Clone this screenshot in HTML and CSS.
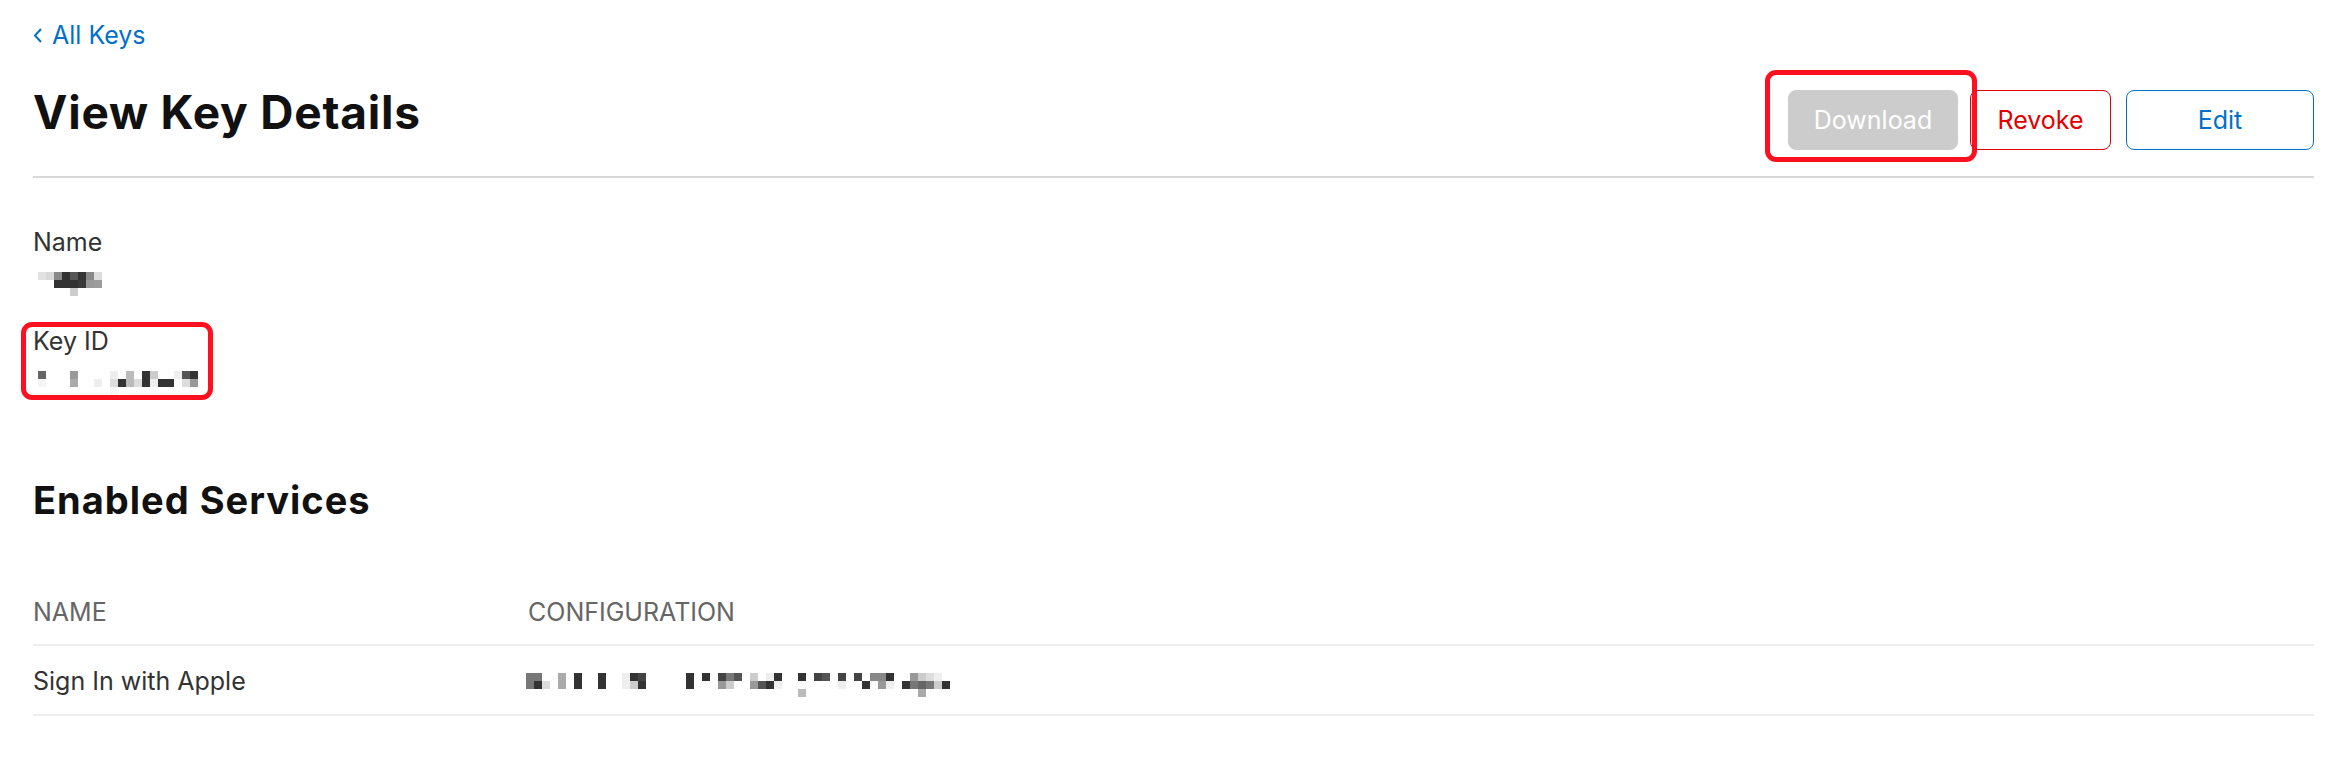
FILE: index.html
```html
<!DOCTYPE html>
<html lang="en">
<head>
<meta charset="UTF-8">
<meta name="viewport" content="width=device-width, initial-scale=1">
<title>View Key Details</title>
<link rel="stylesheet" href="styles.css">
</head>
<body>

<div class="page">
  <a class="back" href="#">
    <svg class="chev" viewBox="0 0 9 15"><polyline points="8,1 2,7.5 8,14" fill="none" stroke="#0070c9" stroke-width="2"/></svg>All Keys
  </a>

  <!-- title + actions -->
  <header class="head">
    <h1>View Key Details</h1>
    <div class="actions">
      <span class="marked">
        <button class="btn btn-off">Download</button>
        <span class="mark mark-dl"></span>
      </span>
      <button class="btn btn-red">Revoke</button>
      <button class="btn btn-blue">Edit</button>
    </div>
  </header>

  <!-- key fields (values are pixelated) -->
  <section class="details">
    <div class="field">
      <div class="label">Name</div>
      <svg class="mosaic" width="64" height="24" viewBox="0 0 8 3" shape-rendering="crispEdges">
        <rect x="0" y="0" width="1" height="1" fill="#e2e2e2"/>
        <rect x="1" y="0" width="1" height="1" fill="#d9d9d9"/>
        <rect x="2" y="0" width="1" height="1" fill="#8a8a8a"/>
        <rect x="3" y="0" width="1" height="1" fill="#333"/>
        <rect x="4" y="0" width="1" height="1" fill="#555"/>
        <rect x="5" y="0" width="1" height="1" fill="#333"/>
        <rect x="6" y="0" width="1" height="1" fill="#888"/>
        <rect x="7" y="0" width="1" height="1" fill="#dcdcdc"/>
        <rect x="2" y="1" width="1" height="1" fill="#333"/>
        <rect x="3" y="1" width="1" height="1" fill="#333"/>
        <rect x="4" y="1" width="1" height="1" fill="#333"/>
        <rect x="5" y="1" width="1" height="1" fill="#3a3a3a"/>
        <rect x="6" y="1" width="1" height="1" fill="#999"/>
        <rect x="7" y="1" width="1" height="1" fill="#9c9c9c"/>
        <rect x="4" y="2" width="1" height="1" fill="#ccc"/>
      </svg>
    </div>
    <div class="field">
      <div class="label">Key ID</div>
      <svg class="mosaic" width="160" height="24" viewBox="0 0 20 3" shape-rendering="crispEdges">
        <rect x="0" y="0" width="1" height="1" fill="#666"/>
        <rect x="4" y="0" width="1" height="1" fill="#999"/>
        <rect x="9" y="0" width="1" height="1" fill="#eee"/>
        <rect x="11" y="0" width="1" height="1" fill="#bbb"/>
        <rect x="13" y="0" width="1" height="1" fill="#333"/>
        <rect x="14" y="0" width="1" height="1" fill="#ccc"/>
        <rect x="17" y="0" width="1" height="1" fill="#eee"/>
        <rect x="18" y="0" width="1" height="1" fill="#555"/>
        <rect x="19" y="0" width="1" height="1" fill="#333"/>
        <rect x="0" y="1" width="1" height="1" fill="#f5f5f5"/>
        <rect x="4" y="1" width="1" height="1" fill="#aaa"/>
        <rect x="7" y="1" width="1" height="1" fill="#eee"/>
        <rect x="9" y="1" width="1" height="1" fill="#ddd"/>
        <rect x="10" y="1" width="1" height="1" fill="#333"/>
        <rect x="11" y="1" width="1" height="1" fill="#bbb"/>
        <rect x="12" y="1" width="1" height="1" fill="#ddd"/>
        <rect x="13" y="1" width="1" height="1" fill="#333"/>
        <rect x="14" y="1" width="1" height="1" fill="#eee"/>
        <rect x="15" y="1" width="2" height="1" fill="#333"/>
        <rect x="18" y="1" width="1" height="1" fill="#ddd"/>
        <rect x="19" y="1" width="1" height="1" fill="#999"/>
        <rect x="9" y="2" width="1" height="1" fill="#f7f7f7"/>
      </svg>
      <span class="mark mark-id"></span>
    </div>
  </section>

  <h2>Enabled Services</h2>

  <div class="table">
    <div class="th">Name</div>
    <div class="th">Configuration</div>
    <div class="td">Sign In with Apple</div>
    <div class="td td-mosaic">
      <svg class="mosaic-cfg" width="424" height="24" viewBox="0 0 53 3" shape-rendering="crispEdges">
        <rect x="0" y="0" width="2" height="1" fill="#777"/>
        <rect x="4" y="0" width="1" height="1" fill="#aaa"/>
        <rect x="6" y="0" width="1" height="1" fill="#333"/>
        <rect x="9" y="0" width="1" height="1" fill="#333"/>
        <rect x="12" y="0" width="1" height="1" fill="#eee"/>
        <rect x="13" y="0" width="1" height="1" fill="#333"/>
        <rect x="14" y="0" width="1" height="1" fill="#444"/>
        <rect x="20" y="0" width="1" height="1" fill="#333"/>
        <rect x="22" y="0" width="1" height="1" fill="#333"/>
        <rect x="24" y="0" width="1" height="1" fill="#444"/>
        <rect x="25" y="0" width="1" height="1" fill="#777"/>
        <rect x="26" y="0" width="1" height="1" fill="#555"/>
        <rect x="28" y="0" width="1" height="1" fill="#ccc"/>
        <rect x="30" y="0" width="1" height="1" fill="#eee"/>
        <rect x="31" y="0" width="1" height="1" fill="#333"/>
        <rect x="34" y="0" width="1" height="1" fill="#333"/>
        <rect x="36" y="0" width="1" height="1" fill="#444"/>
        <rect x="37" y="0" width="1" height="1" fill="#555"/>
        <rect x="39" y="0" width="1" height="1" fill="#444"/>
        <rect x="41" y="0" width="1" height="1" fill="#444"/>
        <rect x="43" y="0" width="2" height="1" fill="#888"/>
        <rect x="45" y="0" width="1" height="1" fill="#333"/>
        <rect x="48" y="0" width="1" height="1" fill="#999"/>
        <rect x="49" y="0" width="1" height="1" fill="#ccc"/>
        <rect x="50" y="0" width="1" height="1" fill="#ddd"/>
        <rect x="51" y="0" width="1" height="1" fill="#eee"/>
        <rect x="0" y="1" width="1" height="1" fill="#777"/>
        <rect x="1" y="1" width="1" height="1" fill="#333"/>
        <rect x="2" y="1" width="1" height="1" fill="#ddd"/>
        <rect x="4" y="1" width="1" height="1" fill="#aaa"/>
        <rect x="6" y="1" width="1" height="1" fill="#333"/>
        <rect x="9" y="1" width="1" height="1" fill="#333"/>
        <rect x="12" y="1" width="1" height="1" fill="#eee"/>
        <rect x="13" y="1" width="1" height="1" fill="#ccc"/>
        <rect x="14" y="1" width="1" height="1" fill="#333"/>
        <rect x="20" y="1" width="1" height="1" fill="#333"/>
        <rect x="24" y="1" width="1" height="1" fill="#999"/>
        <rect x="25" y="1" width="1" height="1" fill="#ccc"/>
        <rect x="28" y="1" width="1" height="1" fill="#999"/>
        <rect x="29" y="1" width="1" height="1" fill="#555"/>
        <rect x="30" y="1" width="1" height="1" fill="#333"/>
        <rect x="31" y="1" width="1" height="1" fill="#eee"/>
        <rect x="39" y="1" width="1" height="1" fill="#eee"/>
        <rect x="42" y="1" width="1" height="1" fill="#333"/>
        <rect x="44" y="1" width="1" height="1" fill="#999"/>
        <rect x="45" y="1" width="1" height="1" fill="#eee"/>
        <rect x="47" y="1" width="1" height="1" fill="#333"/>
        <rect x="48" y="1" width="1" height="1" fill="#777"/>
        <rect x="49" y="1" width="1" height="1" fill="#666"/>
        <rect x="50" y="1" width="1" height="1" fill="#777"/>
        <rect x="51" y="1" width="1" height="1" fill="#ccc"/>
        <rect x="52" y="1" width="1" height="1" fill="#333"/>
        <rect x="34" y="2" width="1" height="1" fill="#bbb"/>
        <rect x="49" y="2" width="1" height="1" fill="#aaa"/>
      </svg>
    </div>
  </div>
</div>

</body>
</html>
```

FILE: styles.css
```css
body{margin:0;background:#fff;color:#333;font-family:Inter,"Noto Sans",sans-serif;}
.page{padding:20px 12px 40px 33px;}

.back{display:inline-flex;align-items:center;gap:10px;font-size:25px;line-height:30px;color:#0070c9;text-decoration:none;}
.chev{width:9px;height:15px;}

.head{display:flex;justify-content:space-between;align-items:flex-start;margin-top:35px;padding-bottom:26px;border-bottom:2px solid #d8d8d8;}
h1{margin:0;font-size:46px;line-height:54px;font-weight:700;letter-spacing:0.8px;color:#111;}
.actions{display:flex;gap:12px;margin-top:5px;}
.btn{height:60px;padding:0;box-sizing:border-box;border:1px solid;border-radius:8px;background:#fff;font-family:inherit;font-size:25px;cursor:pointer;}
.btn-off{width:170px;background:#ccc;border-color:#ccc;color:#fff;cursor:default;}
.btn-red{width:141px;color:#e30000;border-color:#e30000;}
.btn-blue{width:188px;margin-left:3px;color:#0070c9;border-color:#0070c9;}

/* red annotation boxes drawn over the page */
.marked{position:relative;display:block;}
.mark{position:absolute;border:5px solid #ff1021;border-radius:11px;pointer-events:none;}
.mark-dl{left:-23px;top:-20px;right:-19px;bottom:-12px;}
.mark-id{left:-12px;top:-4px;width:192px;bottom:-5px;box-sizing:border-box;}

.details{padding-top:49px;}
.field{position:relative;}
.field + .field{margin-top:30px;}
.label{font-size:25px;line-height:30px;color:#333;}
.mosaic{display:block;margin:15px 0 0 5px;}

h2{margin:83px 0 0;font-size:38px;line-height:44px;font-weight:700;letter-spacing:1px;color:#111;}

.table{display:grid;grid-template-columns:495px 1fr;margin-top:75px;}
.th{font-size:25px;line-height:30px;color:#666;text-transform:uppercase;padding-bottom:17px;border-bottom:2px solid #eee;}
.td{font-size:25px;line-height:30px;color:#333;padding:20px 0 18px;border-bottom:2px solid #eee;}
.td-mosaic{padding:27px 0 17px;}
.mosaic-cfg{display:block;margin-left:-2px;}
```
